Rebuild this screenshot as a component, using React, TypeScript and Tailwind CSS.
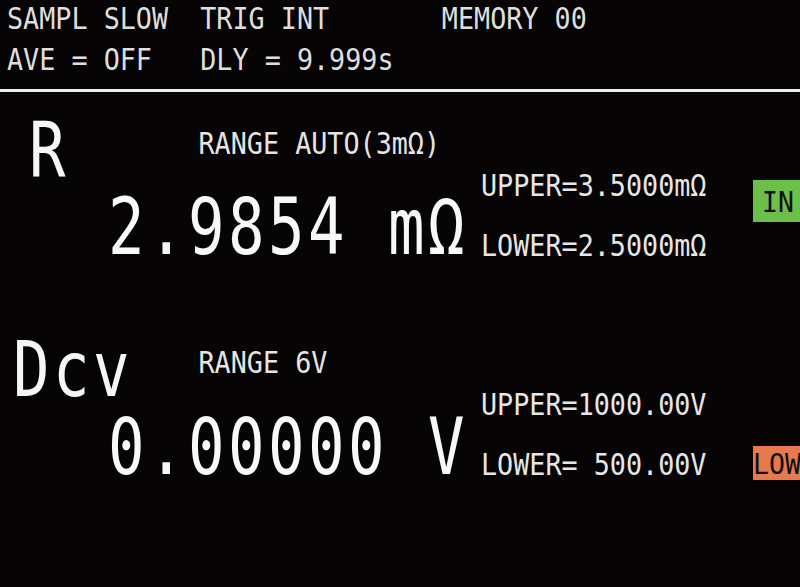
const mono = "font-['DejaVu_Sans_Mono',monospace]";

type Reading = {
  name: string;
  namePad: string;
  range: string;
  value: string;
  valueGap: string;
  upper: string;
  lower: string;
  badge: string;
  badgeBox: string;
};

const READINGS: Reading[] = [
  {
    name: "R",
    namePad: "pl-[29px]",
    range: "RANGE AUTO(3mΩ)",
    value: "2.9854 mΩ",
    valueGap: "mt-[9px]",
    upper: "UPPER=3.5000mΩ",
    lower: "LOWER=2.5000mΩ",
    badge: "IN",
    badgeBox: "mt-[88px] h-[42px] pl-[9px] pt-[9px] bg-[#6cbf4a]",
  },
  {
    name: "Dcv",
    namePad: "pl-[13px]",
    range: "RANGE 6V",
    value: "0.00000 V",
    valueGap: "mt-[10px]",
    upper: "UPPER=1000.00V",
    lower: "LOWER= 500.00V",
    badge: "LOW",
    badgeBox: "mt-[135px] h-[34px] pl-[0px] pt-[5px] bg-[#e7794f]",
  },
];

function Block({ r }: { r: Reading }) {
  return (
    <section className="flex h-[219px]">
      <div className="flex w-[481px] flex-col pt-[22px]">
        <div className="flex h-[66px]">
          <div className={`w-[198.5px] shrink-0 ${r.namePad}`}>
            <span className="block origin-top-left scale-x-[0.92] scale-y-[1.15] whitespace-pre text-[66px] leading-none tracking-[3.75px] text-[#f6f6f6]">
              {r.name}
            </span>
          </div>
          <span className="mt-[15.6px] block h-[26.5px] origin-top-left scale-y-[1.1] whitespace-pre text-[26.75px] leading-none text-[#e4e4e4]">
            {r.range}
          </span>
        </div>
        <div className={`pl-[108px] ${r.valueGap}`}>
          <span className="block origin-top-left scale-x-[0.92] scale-y-[1.18] whitespace-pre text-[66px] leading-none tracking-[3.75px] text-[#f8f8f8]">
            {r.value}
          </span>
        </div>
      </div>

      <div className="flex w-[272px] flex-col gap-[33.5px] pt-[79.6px]">
        <span className="block h-[26.5px] origin-top-left scale-y-[1.1] whitespace-pre text-[26.75px] leading-none text-[#e6e6e6]">
          {r.upper}
        </span>
        <span className="block h-[26.5px] origin-top-left scale-y-[1.1] whitespace-pre text-[26.75px] leading-none text-[#e6e6e6]">
          {r.lower}
        </span>
      </div>

      <div className="flex-1 overflow-hidden">
        <div className={`w-[80px] ${r.badgeBox}`}>
          <span className="block origin-top-left scale-y-[1.05] whitespace-pre text-[26.5px] leading-none text-[#101010]">
            {r.badge}
          </span>
        </div>
      </div>
    </section>
  );
}

export default function App() {
  return (
    <div className={`h-[587px] w-[800px] overflow-hidden bg-[#060404] ${mono}`}>
      <header className="flex flex-col gap-[14.5px] pl-[7px] pt-[3.5px] text-[26.75px] leading-none text-[#dedede]">
        <div className="h-[26.5px] origin-top-left scale-y-[1.12] whitespace-pre">
          SAMPL SLOW  TRIG INT       MEMORY 00
        </div>
        <div className="h-[26.5px] origin-top-left scale-y-[1.12] whitespace-pre">
          AVE = OFF   DLY = 9.999s
        </div>
      </header>
      <div className="mt-[18px] h-[3px] bg-[#ececec]" />

      {READINGS.map((r) => (
        <Block key={r.name} r={r} />
      ))}
    </div>
  );
}
